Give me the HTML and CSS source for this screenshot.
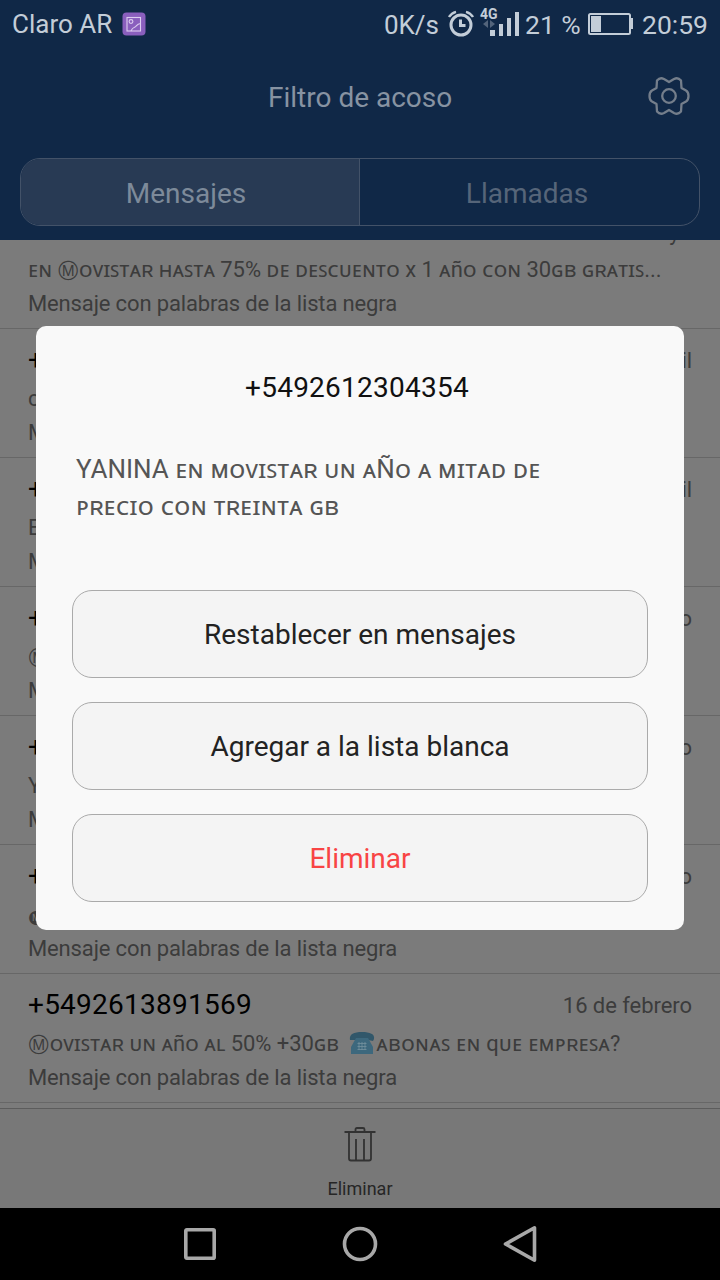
FILE: index.html
```html
<!DOCTYPE html>
<html lang="es">

<head>
    <meta charset="utf-8">
    <title>Filtro de acoso</title>
    <link rel="stylesheet" href="styles.css">
</head>

<body>
    <div class="screen">
        <header class="header">
            <div class="statusbar">
                <span class="carrier">Claro AR</span>
                <svg class="photo-icon" width="24" height="24" viewBox="0 0 24 24">
                    <rect x="0.5" y="0.5" width="23" height="23" rx="4" fill="#8a5fbd" />
                    <g fill="none" stroke="#dccdf0" stroke-width="1.1">
                        <rect x="5" y="5.5" width="13.5" height="13.5" />
                        <circle cx="9" cy="9.5" r="1.9" />
                        <path d="M9 19c1-3 2.500-3.500 4-4s1.500-3 5.500-3.500" />
                    </g>
                </svg>
                <span class="speed">0K/s</span>
                <svg class="alarm-icon" width="26" height="28" viewBox="0 0 26 28">
                    <g fill="none" stroke="#c3cdd8" stroke-width="3">
                        <circle cx="13" cy="16" r="10" />
                        <path d="M12.500 10.500v6h5" />
                        <path d="M1 8C2.500 5.500 5 3.500 8 2.800M25 8C23.500 5.500 21 3.500 18 2.800" stroke-width="2.400" />
                    </g>
                </svg>
                <div class="signal">
                    <span class="net">4G</span>
                    <svg width="40" height="30" viewBox="0 0 40 30">
                        <path d="M7 10v8l-5-4zM9 10v8l5-4z" fill="#53647b" />
                        <path d="M9 20h5v6H9zM18 14h4v12h-4zM26 8h4v18h-4zM34 2h4v24h-4z" fill="#c3cdd8" />
                    </svg>
                </div>
                <span class="percent">21 %</span>
                <svg class="battery" width="46" height="24" viewBox="0 0 46 24">
                    <rect x="1" y="2" width="41" height="20" rx="1.500" fill="none" stroke="#c3cdd8" stroke-width="2" />
                    <path d="M3 4h10v16H3z" fill="#c3cdd8" />
                    <path d="M42 6h3v11h-3z" fill="#c3cdd8" />
                </svg>
                <span class="clock">20:59</span>
            </div>
            <div class="titlebar">
                <h1>Filtro de acoso</h1>
                <svg class="gear" width="44" height="44" viewBox="-22 -22 44 44">
                    <g fill="none" stroke="#747e8b" stroke-width="2.300" stroke-linejoin="round">
                        <circle r="6.800" />
                        <path d="M0-14 5-17Q9-19 12-15.500L12.500-8 17-5.500Q19.500-4 19.500 0T17 5.500L12.500 8 12 15.500Q9 19 5 17L0 14-5 17Q-9 19-12 15.500L-12.500 8-17 5.500Q-19.500 4-19.500 0T-17-5.500L-12.500-8-12-15.500Q-9-19-5-17Z" />
                    </g>
                </svg>
            </div>
            <div class="tabs">
                <div class="tab active">Mensajes</div>
                <div class="tab">Llamadas</div>
            </div>
        </header>

        <main class="list">
            <div class="row first">
                <div class="top"><span class="number">+5492612301456</span><span class="date">9 de mayo</span></div>
                <p class="message">ᴇɴ <span class="circled">Ⓜ</span>ᴏᴠɪꜱᴛᴀʀ ʜᴀꜱᴛᴀ 75% ᴅᴇ ᴅᴇꜱᴄᴜᴇɴᴛᴏ x 1 ᴀñᴏ ᴄᴏɴ 30ɢʙ ɢʀᴀᴛɪꜱ...</p>
                <p class="reason">Mensaje con palabras de la lista negra</p>
            </div>
            <div class="row">
                <div class="top"><span class="number">+</span><span class="date">abril</span></div>
                <p class="message">c</p>
                <p class="reason">M</p>
            </div>
            <div class="row">
                <div class="top"><span class="number">+</span><span class="date">abril</span></div>
                <p class="message">E</p>
                <p class="reason">M</p>
            </div>
            <div class="row">
                <div class="top"><span class="number">+</span><span class="date">marzo</span></div>
                <p class="message"><span class="circled">Ⓜ</span></p>
                <p class="reason">M</p>
            </div>
            <div class="row">
                <div class="top"><span class="number">+</span><span class="date">marzo</span></div>
                <p class="message">Y</p>
                <p class="reason">M</p>
            </div>
            <div class="row">
                <div class="top"><span class="number">+</span><span class="date">febrero</span></div>
                <p class="message"><span class="circled">🅜</span></p>
                <p class="reason">Mensaje con palabras de la lista negra</p>
            </div>
            <div class="row">
                <div class="top"><span class="number">+5492613891569</span><span class="date">16 de febrero</span></div>
                <p class="message"><span class="circled">Ⓜ</span>ᴏᴠɪꜱᴛᴀʀ ᴜɴ ᴀñᴏ ᴀʟ 50% +30ɢʙ <svg class="phone" width="26" height="24" viewBox="0 0 26 24">
                        <path d="M1 9C0 3 5 1 13 1s13 2 12 7l-1 2-5-1-1-2H8L7 9z" fill="#31576a" />
                        <path d="M7 7h12l5 9v7H2v-7z" fill="#3d687d" />
                        <path d="M10 11v8M13 11v8M16 11v8M8.500 12.500h9M8.500 15.500h9M8.500 18.500h9" stroke="#75929e" stroke-width="0.800" />
                    </svg><span class="wide">ᴀʙᴏɴᴀꜱ ᴇɴ qᴜᴇ ᴇᴍᴘʀᴇꜱᴀ?</span></p>
                <p class="reason">Mensaje con palabras de la lista negra</p>
            </div>
        </main>

        <footer class="toolbar">
            <svg width="32" height="36" viewBox="0 0 32 36">
                <g fill="none" stroke="#323232" stroke-width="1.800">
                    <path d="M0.500 6h31M11.500 6V3.500Q11.500 2 13 2h6q1.500 0 1.500 1.500V6M5 6v26.500Q5 34.500 7 34.500h18q2 0 2-2V6M12 13v21M20 13v21" />
                </g>
            </svg>
            <span>Eliminar</span>
        </footer>

        <nav class="navbar">
            <svg width="40" height="40" viewBox="0 0 40 40"><rect x="5.800" y="5.800" width="28.400" height="28.400" rx="1" /></svg>
            <svg width="40" height="40" viewBox="0 0 40 40"><circle cx="20" cy="20" r="15.500" /></svg>
            <svg width="40" height="40" viewBox="0 0 40 40"><path d="M34.500 3.800v32.400L5.500 20z" /></svg>
        </nav>

        <div class="dialog">
            <h2>+5492612304354</h2>
            <p>YANINA ᴇɴ ᴍᴏᴠɪꜱᴛᴀʀ ᴜɴ ᴀÑᴏ ᴀ ᴍɪᴛᴀᴅ ᴅᴇ ᴘʀᴇᴄɪᴏ ᴄᴏɴ ᴛʀᴇɪɴᴛᴀ ɢʙ</p>
            <button>Restablecer en mensajes</button>
            <button>Agregar a la lista blanca</button>
            <button class="danger">Eliminar</button>
        </div>
    </div>
</body>

</html>
```
FILE: styles.css
```css
* {
    box-sizing: border-box;
}

body {
    margin: 0;
    font-family: Roboto, "Noto Sans", "DejaVu Sans", sans-serif;
}

h1, h2, p {
    margin: 0;
    font-weight: 400;
}

svg {
    flex: none;
}

.screen {
    position: relative;
    width: 720px;
    height: 1280px;
    display: flex;
    flex-direction: column;
    overflow: hidden;
    background-color: #7b7b7b;
}

.header {
    height: 240px;
    background-color: #102847;
}

.statusbar {
    height: 48px;
    padding: 0 12px;
    display: flex;
    align-items: center;
    color: #c3cdd8;
    font-size: 27px;
    white-space: nowrap;
}

.carrier {
    width: 110px;
    font-size: 26px;
}

.speed {
    margin-left: auto;
    padding-top: 2px;
    font-size: 26px;
}

.alarm-icon {
    margin: 0 7px 3px 9px;
}

.signal {
    position: relative;
    height: 30px;
    margin: 1px 4px 0 0;
}

.net {
    position: absolute;
    left: -1px;
    top: -3px;
    font-size: 14px;
    font-weight: 700;
    line-height: 14px;
}

.percent {
    width: 63px;
    font-size: 26.5px;
}

.battery {
    margin-right: 8px;
}

.clock {
    font-size: 26.5px;
}

.titlebar {
    height: 110px;
    display: grid;
    grid-template-columns: 1fr 184px 1fr;
    padding-bottom: 13px;
    align-items: center;
}

.titlebar h1 {
    grid-column: 2;
    padding-top: 2px;
    color: #8793a2;
    font-size: 28px;
    text-align: center;
    white-space: nowrap;
}

.gear {
    justify-self: end;
    margin: 0 29px 2px 0;
}

.tabs {
    height: 68px;
    margin: 0 20px;
    display: flex;
    border: 1px solid #435268;
    border-radius: 20px;
    overflow: hidden;
}

.tab {
    flex: 1;
    display: flex;
    align-items: center;
    justify-content: center;
    padding: 2px 5px 0 0;
    color: #566579;
    font-size: 28px;
}

.tab.active {
    flex: none;
    width: 339px;
    background-color: #283a54;
    border-right: 1px solid #435268;
    color: #7d8a9a;
    padding-right: 8px;
}

.list {
    height: 868px;
    overflow: hidden;
}

.row {
    height: 129px;
    padding: 14px 28px 0;
    border-bottom: 1px solid #676767;
}

/* scrolled halfway under the header */
.row.first {
    margin-top: -40px;
}

.top {
    height: 35px;
    display: flex;
    justify-content: space-between;
    line-height: 34px;
}

.number {
    color: #000;
    font-size: 28px;
    letter-spacing: 0.25px;
}

.date {
    padding-top: 1px;
    color: #3c3c3c;
    font-size: 22px;
    letter-spacing: -0.05px;
}

.first .date {
    padding-top: 2px;
}

.message,
.reason {
    height: 34px;
    color: #3c3c3c;
    font-size: 22px;
    line-height: 34px;
    white-space: nowrap;
}

.reason {
    letter-spacing: -0.14px;
}

.message {
    margin-top: 4px;
    letter-spacing: -0.07px;
}

.circled {
    margin: 0 1px;
    font-family: Inter, "DejaVu Sans", sans-serif;
    font-size: 14px;
    line-height: 1;
    vertical-align: 1px;
}

.wide {
    letter-spacing: 0.18px;
}

.phone {
    margin: 0 1px 0 5px;
    vertical-align: -4px;
}

.toolbar {
    height: 100px;
    padding-top: 17px;
    display: flex;
    flex-direction: column;
    align-items: center;
    gap: 16px;
    border-top: 1px solid #5c5c5c;
    background-color: #787878;
    color: #262626;
    font-size: 18px;
}

.navbar {
    height: 72px;
    display: flex;
    justify-content: center;
    align-items: center;
    gap: 120px;
    background-color: #000;
    fill: none;
    stroke: #a8a8a8;
    stroke-width: 3.6px;
    stroke-linejoin: round;
}

/* sits over the list */
.dialog {
    position: absolute;
    left: 36px;
    top: 326px;
    width: 648px;
    height: 604px;
    padding: 45px 36px 28px;
    display: flex;
    flex-direction: column;
    gap: 24px;
    border-radius: 10px;
    background-color: #f9f9f9;
}

.dialog h2 {
    padding-right: 6px;
    color: #111;
    font-size: 28px;
    line-height: 34px;
    letter-spacing: 0.25px;
    text-align: center;
}

.dialog p {
    flex: 1;
    margin: 0 90px 0 4px;
    padding-top: 22px;
    color: #555;
    font-size: 26px;
    line-height: 37px;
}

.dialog button {
    height: 88px;
    border: 1px solid #aaa;
    border-radius: 20px;
    background-color: #f4f4f4;
    color: #222;
    font-family: inherit;
    font-size: 28px;
}

.dialog .danger {
    color: #f84444;
}
```
